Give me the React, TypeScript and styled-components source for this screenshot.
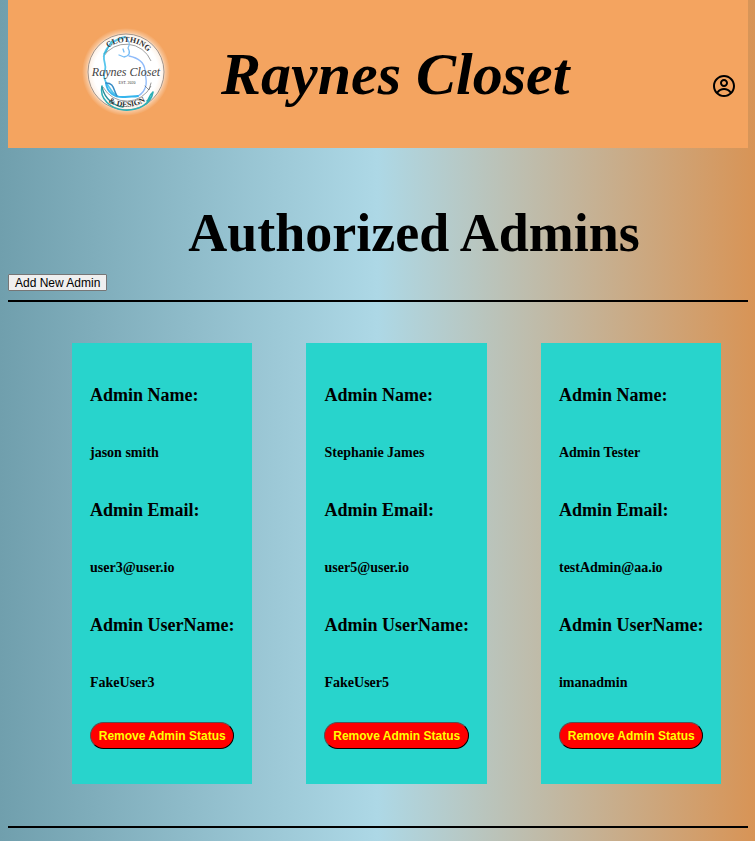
import React from "react";
import styled, { createGlobalStyle } from "styled-components";
import { CgProfile } from "react-icons/cg";

const GlobalStyle = createGlobalStyle`
  *, *::before, *::after { box-sizing: border-box; }
  body {
    margin: 0;
    color: #000;
    font-family: "Liberation Serif", "Times New Roman", serif;
  }
`;

const Page = styled.div`
  min-height: 100vh;
  padding: 0 7px 12px 8px;
  background: linear-gradient(to right, #709fad, #add8e6 50%, #d89456);
`;

const Header = styled.header`
  display: flex;
  align-items: center;
  min-height: 148px;
  padding: 0 12px 0 68px;
  background: #f4a460;
`;

const LogoLink = styled.a`
  display: block;
  flex: none;
  width: 100px;
  height: 100px;
  margin-bottom: 4px;
`;

const Brand = styled.h1`
  margin: 0 0 0 45px;
  font-size: 60px;
  line-height: 68px;
  font-style: italic;
  font-weight: bold;
  white-space: nowrap;
`;

const ProfileButton = styled.button`
  display: block;
  margin: 24px 0 0 auto;
  padding: 0;
  border: 0;
  background: none;
  color: #000;
  cursor: pointer;

  svg { display: block; }
`;

const PageTitle = styled.h2`
  margin: 0;
  padding: 54px 0 10px 72px;
  font-size: 54px;
  line-height: 62px;
  text-align: center;
`;

const AddButton = styled.button`
  display: block;
  height: 17px;
  padding: 1px 6px 0;
  border: 1px solid #767676;
  border-radius: 1px;
  background: #efefef;
  color: #000;
  font: 12px/14px "Liberation Sans", Arial, sans-serif;
  cursor: pointer;
`;

const AdminList = styled.ul`
  display: flex;
  flex-wrap: wrap;
  gap: 54px;
  margin: 9px 0 0;
  padding: 41px 0 42px 64px;
  border: solid #000;
  border-width: 2px 0;
  list-style: none;
`;

const Card = styled.li`
  padding: 42px 18px 35px;
  background: #28d4cc;
`;

const Details = styled.dl`
  margin: 0 0 31px;
  font-weight: bold;
`;

const Label = styled.dt`
  margin-bottom: 38px;
  font-size: 18px;
  line-height: 21px;
`;

const Value = styled.dd`
  margin: 0;
  font-size: 14px;
  line-height: 17px;

  & + dt { margin-top: 39px; }
`;

const RemoveButton = styled.button`
  display: block;
  width: 100%;
  height: 27px;
  padding: 0;
  border: 1px outset #000;
  border-radius: 14px;
  background: #f00;
  color: #ff0;
  font: bold 12px/24px "Liberation Sans", Arial, sans-serif;
  white-space: nowrap;
  cursor: pointer;
`;

function Logo() {
  return (
    <svg width="100" height="100" viewBox="0 0 100 100" role="img" aria-label="Raynes Closet logo">
      <defs>
        <radialGradient id="glow">
          <stop offset="0.84" stopColor="#fff" stopOpacity="0.8" />
          <stop offset="0.9" stopColor="#fff" stopOpacity="0.35" />
          <stop offset="1" stopColor="#fff" stopOpacity="0" />
        </radialGradient>
        <radialGradient id="disc">
          <stop offset="0.85" stopColor="#fff" />
          <stop offset="1" stopColor="#fdf0e4" />
        </radialGradient>
        <path id="arc-top" d="M20 50A30 30 0 0 1 80 50" />
        <path id="arc-bottom" d="M15 50A35 35 0 0 0 85 50" />
      </defs>
      <circle cx="50" cy="50" r="44" fill="url(#glow)" />
      <circle cx="50" cy="50" r="38" fill="url(#disc)" stroke="#8b8078" strokeWidth="0.8" />
      <path d="M27 35A27 27 0 0 1 75 39M27 65A27 27 0 0 0 75 64" fill="none" stroke="#777" strokeWidth="0.7" />
      <g fill="none" strokeLinecap="round" strokeLinejoin="round">
        <path d="M49 15C39 17 29 25 28 34C27 40 31 43 29 49C26 55 29 60 33 65C36 69 36 71 40 73" stroke="#57c6ed" strokeWidth="1.8" />
        <path d="M36 19C31 24 33 28 28 32" stroke="#3bb5d5" strokeWidth="1.2" />
        <path d="M49 15C54 19 54 23 52 26C55 31 53 34 48 35L43 33M47 27L48 30" stroke="#77bdf5" strokeWidth="1.3" />
        <path d="M53 34C63 36 68 40 69 48C69 53 71 58 70 63C69 68 66 72 62 74" stroke="#8fbbfa" strokeWidth="1.3" />
        <path d="M30 61C31 70 38 76 49 75C54 74 58 75 62 74" stroke="#36b5ed" strokeWidth="2" />
        <path d="M30 61C38 61 37 67 41 74" stroke="#398cc5" strokeWidth="1.5" />
        <path d="M26 64C23 77 35 87 48 88C62 89 75 82 77 70C72 74 74 77 71 79" stroke="#2dafb5" strokeWidth="1.6" />
        <path d="M26 65C29 78 39 84 47 85" stroke="#278f9c" strokeWidth="1.3" />
        <path d="M75 61L73 68L69 64" stroke="#555" strokeWidth="0.6" />
      </g>
      <g fill="#333" textAnchor="middle" fontFamily="Liberation Serif, serif">
        <text fontSize="8" fontWeight="bold">
          <textPath href="#arc-top" startOffset="53%">CLOTHING</textPath>
        </text>
        <text fontSize="8" fontWeight="bold">
          <textPath href="#arc-bottom" startOffset="51%">&amp; DESIGN</textPath>
        </text>
        <text x="50" y="54" fontSize="12" fontStyle="italic" fill="#444">Raynes Closet</text>
        <text x="51" y="62" fontSize="4">EST. 2020</text>
      </g>
    </svg>
  );
}

const admins = [
  { name: "jason smith", email: "user3@user.io", username: "FakeUser3" },
  { name: "Stephanie James", email: "user5@user.io", username: "FakeUser5" },
  { name: "Admin Tester", email: "testAdmin@aa.io", username: "imanadmin" },
];

export default function App() {
  return (
    <>
      <GlobalStyle />
      <Page>
        <Header>
          <LogoLink href="#"><Logo /></LogoLink>
          <Brand>Raynes Closet</Brand>
          <ProfileButton type="button" aria-label="Profile"><CgProfile size={24} /></ProfileButton>
        </Header>
        <main>
          <PageTitle>Authorized Admins</PageTitle>
          <AddButton type="button">Add New Admin</AddButton>
          <AdminList>
            {admins.map((admin) => (
              <Card key={admin.username}>
                <Details>
                  <Label>Admin Name:</Label>
                  <Value>{admin.name}</Value>
                  <Label>Admin Email:</Label>
                  <Value>{admin.email}</Value>
                  <Label>Admin UserName:</Label>
                  <Value>{admin.username}</Value>
                </Details>
                <RemoveButton type="button">Remove Admin Status</RemoveButton>
              </Card>
            ))}
          </AdminList>
        </main>
      </Page>
    </>
  );
}
